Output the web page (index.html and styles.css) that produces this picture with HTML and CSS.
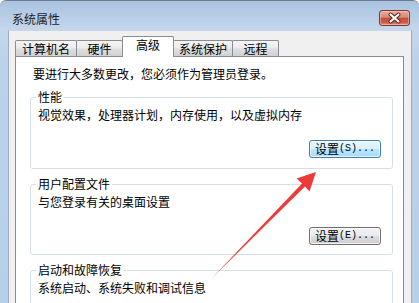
FILE: index.html
```html
<!DOCTYPE html>
<html lang="zh-CN">
<head>
<meta charset="utf-8">
<title>系统属性</title>
<link rel="stylesheet" href="styles.css">
</head>
<body>
<div class="window">
  <div class="titlebar">
    <span class="title">系统属性</span>
    <button class="close" aria-label="关闭">
      <svg width="31" height="16" viewBox="0 0 31 16">
        <path d="M11.5 4.5 L19.5 11.5 M19.5 4.5 L11.5 11.5" stroke="#5a1f1a" stroke-width="4" stroke-linecap="round" fill="none"/>
        <path d="M11.5 4.5 L19.5 11.5 M19.5 4.5 L11.5 11.5" stroke="#ffffff" stroke-width="2.2" stroke-linecap="round" fill="none"/>
      </svg>
    </button>
  </div>
  <div class="client">
    <div class="tabs">
      <div class="tab tab-w1">计算机名</div>
      <div class="tab tab-w2">硬件</div>
      <div class="tab tab-active">高级</div>
      <div class="tab tab-w4">系统保护</div>
      <div class="tab tab-w2">远程</div>
    </div>
    <div class="panel">
      <p class="intro">要进行大多数更改，您必须作为管理员登录。</p>
      <fieldset class="group">
        <legend>性能</legend>
        <p class="desc">视觉效果，处理器计划，内存使用，以及虚拟内存</p>
        <div class="actions"><button class="btn btn-hot">设置<span class="acc">(S)...</span></button></div>
      </fieldset>
      <fieldset class="group">
        <legend>用户配置文件</legend>
        <p class="desc">与您登录有关的桌面设置</p>
        <div class="actions"><button class="btn">设置<span class="acc">(E)...</span></button></div>
      </fieldset>
      <fieldset class="group group-last">
        <legend>启动和故障恢复</legend>
        <p class="desc">系统启动、系统失败和调试信息</p>
      </fieldset>
    </div>
  </div>
  <svg class="arrow" width="419" height="303" viewBox="0 0 419 303">
    <polygon points="212,277 302,182.4 296.5,177.5 316,171 309.5,190.5 305,185.6" fill="#ef3a3a"/>
  </svg>
</div>
</body>
</html>
```

FILE: styles.css
```css
* { box-sizing: border-box; }
html, body {
  margin: 0;
  padding: 0;
  background: #ffffff;
}
body {
  font-family: "Noto Sans CJK SC", "Liberation Sans", sans-serif;
  font-size: 12px;
  color: #000;
}
.window {
  position: relative;
  width: 419px;
  height: 303px;
  overflow: hidden;
  display: flex;
  flex-direction: column;
  background: linear-gradient(to bottom, #a9c3e0 0px, #c3d6ec 28px, #bcd2ea 60px, #b8cfe9 100%);
  border-top: 1px solid #6b7d92;
  border-radius: 6px 6px 0 0;
}
.titlebar {
  height: 29px;
  flex: none;
  display: flex;
  justify-content: space-between;
  align-items: flex-start;
}
.title {
  margin: 11px 0 0 12px;
  line-height: 14px;
  color: #1e1e1e;
}
.close {
  margin: 9px 9px 0 0;
  width: 31px;
  height: 16px;
  padding: 0;
  border: 1px solid #7a3a32;
  border-radius: 3px;
  background: linear-gradient(to bottom, #eaa99b 0%, #d98a78 45%, #c3503d 50%, #c95a46 80%, #e0907c 100%);
  box-shadow: inset 0 0 0 1px rgba(255, 220, 210, 0.45);
  display: flex;
  align-items: center;
  justify-content: center;
}
.close svg { display: block; margin: -1px; }
.client {
  flex: 1;
  min-height: 0;
  margin: 0 7px 0 8px;
  border-left: 1px solid #9aabbf;
  border-right: 1px solid #9aabbf;
  border-top: 1px solid #c9d6e4;
  background: #f0f0f0;
  padding: 5px 7px 0 6px;
  display: flex;
  flex-direction: column;
}
.tabs {
  display: flex;
  align-items: flex-end;
  height: 20px;
  flex: none;
  position: relative;
  z-index: 2;
}
.tab {
  height: 16px;
  line-height: 15px;
  border: 1px solid #898c95;
  border-bottom: none;
  border-radius: 2px 2px 0 0;
  background: linear-gradient(to bottom, #f4f4f4 0%, #ececec 45%, #dedede 55%, #d2d2d2 100%);
  text-align: center;
  margin-left: -1px;
  white-space: nowrap;
}
.tab:first-child { margin-left: 0; }
.tab-w1 { width: 62px; }
.tab-w2 { width: 47px; }
.tab-w4 { width: 60px; }
.tab-active {
  width: 52px;
  height: 21px;
  line-height: 14px;
  padding: 1px 0 5px;
  margin-bottom: -1px;
  background: #ffffff;
  position: relative;
  z-index: 3;
}
.panel {
  flex: 1;
  min-height: 0;
  overflow: hidden;
  background: #ffffff;
  border: 1px solid #898c95;
  border-bottom: none;
  padding: 10px 10px 0 14px;
  position: relative;
  z-index: 1;
}
.intro {
  margin: 0;
  padding-left: 3px;
  line-height: 14px;
}
.group {
  margin: 8px 0 0;
  padding: 4px 11px 9px 5px;
  border: 1px solid #d5dfe5;
  border-radius: 3px;
  min-width: 0;
}
.panel .intro + .group { margin-top: 9px; padding-bottom: 10px; }
.group-last { min-height: 80px; }
.group legend {
  padding: 0 2px;
  line-height: 14px;
}
.desc {
  margin: 0;
  padding-left: 2px;
  line-height: 14px;
}
.actions {
  display: flex;
  justify-content: flex-end;
  margin-top: 18px;
}
.btn {
  width: 72px;
  height: 18px;
  padding: 0;
  font-family: "Noto Sans CJK SC", sans-serif;
  font-size: 12px;
  line-height: 16px;
  color: #000;
  border: 1px solid #707070;
  border-radius: 3px;
  background: linear-gradient(to bottom, #f2f2f2 0%, #ebebeb 48%, #dddddd 52%, #cfcfcf 100%);
  box-shadow: inset 0 0 0 1px rgba(255, 255, 255, 0.7);
  display: flex;
  align-items: center;
  justify-content: center;
}
.btn-hot {
  border-color: #3c7fb1;
  background: linear-gradient(to bottom, #eaf6fd 0%, #d9f0fc 48%, #bee6fd 52%, #a7d9f5 100%);
}
.acc {
  font-family: "Liberation Mono", monospace;
  font-size: 10px;
}
.arrow {
  position: absolute;
  left: 0;
  top: 0;
  z-index: 10;
  pointer-events: none;
}
```
